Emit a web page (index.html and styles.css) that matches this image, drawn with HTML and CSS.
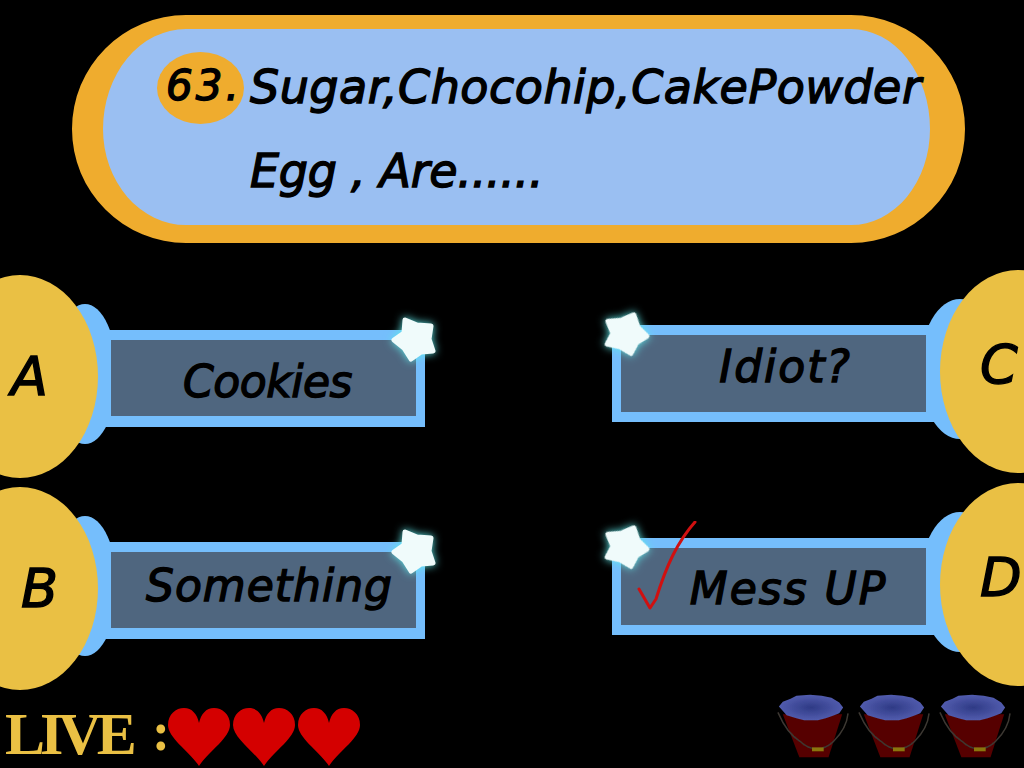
FILE: index.html
```html
<!DOCTYPE html>
<html>
<head>
    <title>Quiz</title>
    <link rel="stylesheet" href="styles.css">
</head>
<body>
    <svg class="defs" width="0" height="0">
        <defs>
            <symbol id="star" viewBox="0 0 60 60">
                <polygon points="21,10 33,15 47,16 45,29 49,41 37,42 27,49 20,38 10,30 20,23" fill="#f0fbfb" stroke="#f0fbfb" stroke-width="5" stroke-linejoin="round"/>
            </symbol>
            <symbol id="heart" viewBox="0 0 62 58">
                <path d="M31 58 C22 44 0 30 0 17 C0 6 8 0 16 0 C24 0 29 6 31 15 C33 6 38 0 46 0 C54 0 62 6 62 17 C62 30 40 44 31 58Z" fill="#d40000"/>
            </symbol>
            <radialGradient id="water">
                <stop offset="0" stop-color="#2e3a85"/>
                <stop offset="1" stop-color="#525cae"/>
            </radialGradient>
            <filter id="soft"><feGaussianBlur stdDeviation="0.6"/></filter>
            <symbol id="bucket" viewBox="0 0 76 70">
                <g filter="url(#soft)">
                    <polygon points="8,24 69,24 55,68 25,68" fill="#560404"/>
                    <path d="M3 22 C9 36 16 46 26 52 C36 62 50 62 60 52 C68 44 74 34 75 23" fill="none" stroke="#3d3833" stroke-width="1.5"/>
                    <rect x="38" y="58" width="12" height="4" fill="#8a7410"/>
                    <polygon points="4,16 8,11 16,8 22,5 36,4 48,5 58,7 66,12 70,17 66,23 58,26 52,28 44,30 30,30 22,28 12,25" fill="url(#water)"/>
                </g>
            </symbol>
        </defs>
    </svg>

    <div class="screen">
        <div class="question">
            <div class="number">63.</div>
            <div class="question-text">
                <span class="line">Sugar,Chocohip,CakePowder</span>
                <span class="line line-short">Egg , Are......</span>
            </div>
        </div>

        <div class="answers">
            <div class="column column-left">
                <div class="answer">
                    <div class="letter letter-a">A</div>
                    <div class="bar">
                        <span class="bar-text text-cookies">Cookies</span>
                        <svg class="star"><use href="#star"/></svg>
                    </div>
                </div>
                <div class="answer">
                    <div class="letter letter-b">B</div>
                    <div class="bar">
                        <span class="bar-text text-something">Something</span>
                        <svg class="star"><use href="#star"/></svg>
                    </div>
                </div>
            </div>
            <div class="column column-right">
                <div class="answer">
                    <div class="bar">
                        <span class="bar-text text-idiot">Idiot?</span>
                        <svg class="star"><use href="#star"/></svg>
                    </div>
                    <div class="letter">C</div>
                </div>
                <div class="answer">
                    <div class="bar">
                        <span class="bar-text text-mess">Mess UP</span>
                        <svg class="star"><use href="#star"/></svg>
                        <svg class="tick" width="64" height="92" viewBox="0 0 64 92">
                            <path d="M3 68 L14 87 L20 78 C25 62 31 46 37 34 C43 22 51 10 59 1" fill="none" stroke="#d01010" stroke-width="3" stroke-linecap="round" stroke-linejoin="round"/>
                        </svg>
                    </div>
                    <div class="letter">D</div>
                </div>
            </div>
        </div>

        <div class="status">
            <div class="lives">
                <span class="live-label">LIVE</span>
                <span class="live-colon">:</span>
                <svg class="heart"><use href="#heart"/></svg>
                <svg class="heart"><use href="#heart"/></svg>
                <svg class="heart"><use href="#heart"/></svg>
            </div>
            <div class="buckets">
                <svg class="bucket"><use href="#bucket"/></svg>
                <svg class="bucket"><use href="#bucket"/></svg>
                <svg class="bucket"><use href="#bucket"/></svg>
            </div>
        </div>
    </div>
</body>
</html>
```

FILE: styles.css
```css
html{
    margin: 0;
    padding: 0;
    background-color: #000000;
}
body{
    margin: 0;
    padding: 0;
}

.defs{
    display: block;
    height: 0;
}

.screen{
    width: 1024px;
    height: 768px;
    overflow: hidden;
    display: flex;
    flex-direction: column;
    font-family: "DejaVu Sans", sans-serif;
    font-style: oblique;
    font-weight: 400;
    -webkit-text-stroke: 1.4px #000000;
    color: #000000;
}

/* question banner */
.question{
    box-sizing: border-box;
    width: 893px;
    height: 228px;
    margin: 15px 0 0 72px;
    display: flex;
    background-color: #9abff2;
    border-style: solid;
    border-color: #efac2e;
    border-width: 14px 35px 18px 31px;
    border-radius: 114px;
}
.number{
    width: 87px;
    height: 72px;
    flex-shrink: 0;
    margin: 23px 0 0 54px;
    padding-left: 9px;
    box-sizing: border-box;
    background-color: #efac2e;
    border-radius: 50%;
    font-size: 42px;
    line-height: 68px;
    letter-spacing: 3px;
    white-space: nowrap;
}
.question-text{
    margin: 16px 0 0 6px;
    font-size: 46px;
    line-height: 84px;
    white-space: nowrap;
}
.line{
    display: block;
    letter-spacing: 0.5px;
}
.line-short{
    letter-spacing: -0.3px;
}

/* answers */
.answers{
    display: flex;
    justify-content: space-between;
    margin-top: 27px;
    height: 420px;
}
.column{
    display: flex;
    flex-direction: column;
}
.column-left{
    width: 425px;
    padding-top: 5px;
    gap: 9px;
}
.column-right{
    width: 412px;
    gap: 10px;
}
.answer{
    display: flex;
    align-items: center;
    height: 203px;
}
.letter{
    flex-shrink: 0;
    box-sizing: border-box;
    position: relative;
    z-index: 1;
    width: 156px;
    height: 203px;
    display: flex;
    align-items: center;
    background-color: #eac044;
    border-radius: 50%;
    font-size: 54px;
}
.column-left .letter{
    margin-left: -58px;
}
.letter-a{
    padding-left: 69px;
}
.letter-b{
    padding-left: 79px;
}
.column-right .letter{
    padding: 0 0 14px 40px;
    margin-right: -72px;
}
.bar{
    box-sizing: border-box;
    flex-shrink: 0;
    position: relative;
    width: 327px;
    height: 97px;
    margin-top: 4px;
    display: flex;
    align-items: center;
    justify-content: center;
    background-color: #4f667f;
    border-style: solid;
    border-color: #75befc;
    border-width: 10px 9px 11px 13px;
}
.column-right .bar{
    width: 328px;
    border-width: 10px 14px 10px 9px;
}
/* the round bump behind the letter */
.bar::before{
    content: "";
    position: absolute;
    z-index: -1;
    top: -36px;
    width: 64px;
    height: 140px;
    background-color: #75befc;
    border-radius: 50%;
}
.column-left .bar::before{
    left: -58px;
}
.column-right .bar::before{
    right: -74px;
    width: 80px;
}
.bar-text{
    font-size: 44px;
    white-space: nowrap;
}
.text-cookies{
    margin: 6px 0 0 8px;
    letter-spacing: -0.5px;
}
.text-something{
    margin: 0 0 10px 12px;
    letter-spacing: 1px;
}
.text-idiot{
    margin: 0 0 14px 24px;
    letter-spacing: 2px;
}
.text-mess{
    margin: 4px 0 0 30px;
    letter-spacing: 2px;
}
.star{
    position: absolute;
    top: -30px;
    right: -28px;
    width: 60px;
    height: 60px;
    filter: drop-shadow(0 0 4px #5fe8ea);
}
.column-right .star{
    right: auto;
    left: -26px;
    transform: rotate(-27deg);
}
.tick{
    position: absolute;
    top: -27px;
    left: 15px;
}

/* bottom row */
.status{
    display: flex;
    justify-content: space-between;
    align-items: flex-start;
    height: 78px;
}
.lives{
    display: flex;
    align-items: flex-start;
    padding: 18px 0 0 5px;
    color: #eac044;
    -webkit-text-stroke: 0;
    font-family: "Liberation Serif", serif;
    font-style: normal;
    font-weight: 700;
}
.live-label{
    width: 128px;
    font-size: 60px;
    line-height: 52px;
    letter-spacing: -5px;
    white-space: nowrap;
}
.live-colon{
    width: 35px;
    padding-left: 19px;
    box-sizing: border-box;
    font-size: 54px;
    line-height: 48px;
}
.heart{
    width: 62px;
    height: 58px;
    margin-right: 3px;
}
.buckets{
    display: flex;
    gap: 7px;
    margin: 0 13px 0 0;
}
.bucket{
    width: 74px;
    height: 70px;
}
```
